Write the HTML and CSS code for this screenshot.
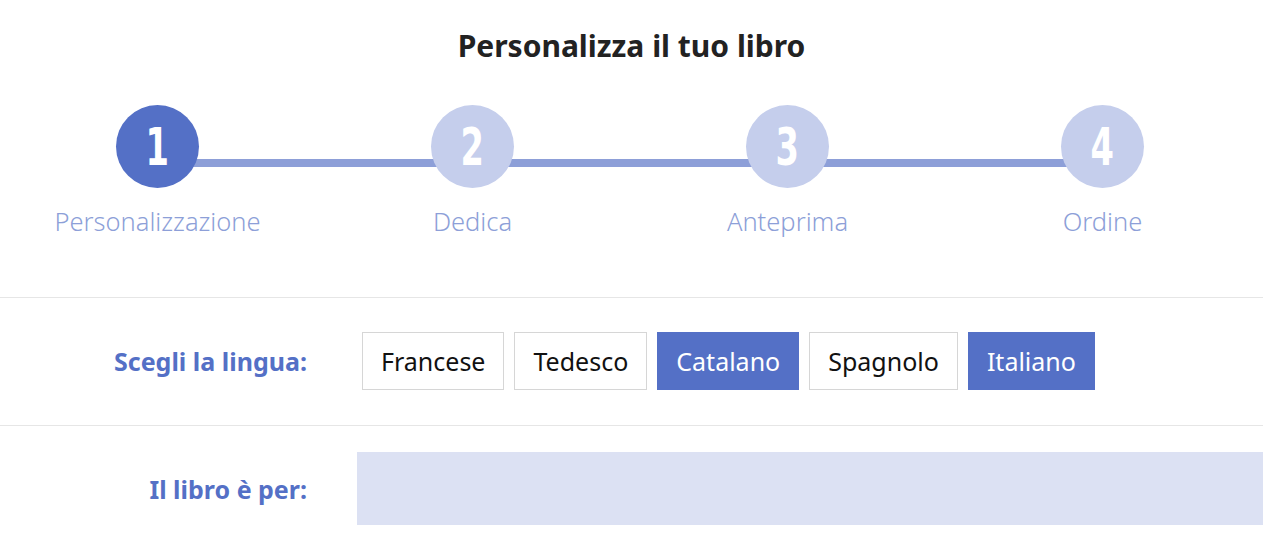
FILE: index.html
```html
<!DOCTYPE html>
<html>
<head>
    <meta name="viewport" content="width=device-width, initial-scale=1.0">
    <title>Personalizza il tuo libro</title>
    <link rel="stylesheet" href="styles.css">
</head>
<body>
    <div class="page">
        <h1 class="title">Personalizza il tuo libro</h1>

        <div class="steps">
            <div class="step active">
                <div class="circle"><span>1</span></div>
                <div class="step-label">Personalizzazione</div>
            </div>
            <div class="step">
                <div class="circle"><span>2</span></div>
                <div class="step-label">Dedica</div>
            </div>
            <div class="step">
                <div class="circle"><span>3</span></div>
                <div class="step-label">Anteprima</div>
            </div>
            <div class="step">
                <div class="circle"><span>4</span></div>
                <div class="step-label">Ordine</div>
            </div>
        </div>

        <div class="row row-lang">
            <label class="row-label">Scegli la lingua:</label>
            <div class="langs">
                <button class="lang">Francese</button>
                <button class="lang">Tedesco</button>
                <button class="lang selected">Catalano</button>
                <button class="lang">Spagnolo</button>
                <button class="lang selected">Italiano</button>
            </div>
        </div>

        <div class="row row-name">
            <label class="row-label" for="name">Il libro è per:</label>
            <input type="text" id="name" class="name-input">
        </div>
    </div>
</body>
</html>
```

FILE: styles.css
```css
body { margin: 0; font-family: "Noto Sans", "Open Sans", sans-serif; color: #222; background: #fff; }
.page { overflow: hidden; }
.title { margin: 0; padding-top: 26px; text-align: center; font-size: 30px; font-weight: 700; line-height: 40px; color: #222; }

.steps { display: flex; padding-top: 39px; }
.step { flex: 0 0 315px; display: flex; flex-direction: column; align-items: center; position: relative; }
.step:not(:last-child)::after { content: ""; position: absolute; top: 54px; left: 158px; width: 315px; height: 8px; background: #8d9fd8; }
.circle { width: 83px; height: 83px; border-radius: 50%; background: #c5ceec; color: #fff; display: flex; align-items: center; justify-content: center; position: relative; z-index: 1; }
.circle span { font-family: "Liberation Sans Narrow", "DejaVu Sans Condensed", sans-serif; font-weight: 700; font-size: 52px; line-height: 1; transform: scaleX(0.72); }
.step.active .circle { background: #5470c6; }
.step-label { margin-top: 16px; font-size: 25.5px; font-weight: 300; color: #8d9fd8; line-height: 34px; white-space: nowrap; }

.row { display: flex; align-items: center; border-top: 1px solid #e6e6e6; }
.row-lang { margin-top: 59px; padding: 34px 0 35px; }
.row-label { flex: 0 0 357px; box-sizing: border-box; padding-right: 50px; text-align: right; font-size: 25px; font-weight: 700; color: #5470c6; }
.langs { display: flex; gap: 10px; padding-left: 5px; }
.lang { font-family: inherit; font-size: 25px; padding: 0 18px; height: 58px; border: 1px solid #d6d6d6; background: #fff; color: #111; }
.lang.selected { background: #5470c6; border-color: #5470c6; color: #fff; }
.row-name { padding-top: 26px; }
.name-input { flex: 1; height: 73px; border: 0; background: #dce1f3; padding: 0 15px; font-family: inherit; font-size: 22px; }
```
